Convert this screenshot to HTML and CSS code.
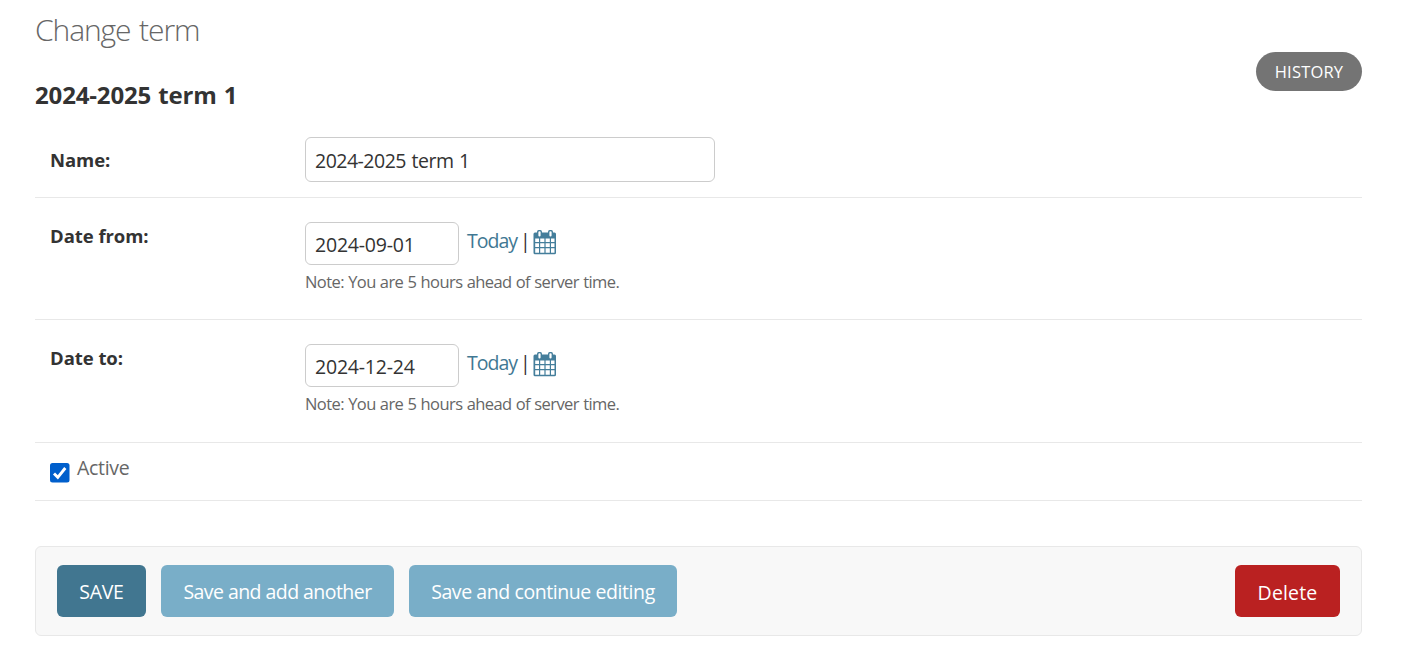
FILE: index.html
```html
<!DOCTYPE html>
<html lang="en">
<head>
<meta charset="utf-8">
<title>Change term</title>
<link rel="stylesheet" href="styles.css">
</head>
<body>
<svg width="0" height="0" class="sprite" aria-hidden="true">
  <symbol id="calendar" viewBox="0 0 24 25">
    <path fill="currentColor" fill-rule="evenodd" d="M0.500 4Q0.500 2.500 2 2.500H4V2Q4 0 5.700 0H7.300Q9 0 9 2V2.500H15V2Q15 0 16.700 0H18.300Q20 0 20 2V2.500H21.500Q23 2.500 23 4V22.800Q23 24.300 21.500 24.300H2Q0.500 24.300 0.500 22.800ZM5.400 2V5.500Q5.400 6.400 6.500 6.400T7.600 5.500V2Q7.600 1.300 6.500 1.300T5.400 2ZM16.400 2V5.500Q16.400 6.400 17.500 6.400T18.600 5.500V2Q18.600 1.300 17.500 1.300T16.400 2ZM2.200 8.500V12H6V8.500ZM7.200 8.500V12H11.400V8.500ZM12.600 8.500V12H16.800V8.500ZM18 8.500V12H21.500V8.500ZM2.200 13.200V17H6V13.200ZM7.200 13.200V17H11.400V13.200ZM12.600 13.200V17H16.800V13.200ZM18 13.200V17H21.500V13.200ZM2.200 18.200V22.700H6V18.200ZM7.200 18.200V22.700H11.400V18.200ZM12.600 18.200V22.700H16.800V18.200ZM18 18.200V22.700H21.500V18.200Z"/>
  </symbol>
</svg>
<main class="content">
  <header class="page-header">
    <div>
      <h1 class="page-title">Change term</h1>
      <h2 class="object-name">2024-2025 term 1</h2>
    </div>
    <a class="history">HISTORY</a>
  </header>
  <form>
    <div class="row row-name">
      <label class="label" for="name">Name:</label>
      <input class="field field-name" id="name" type="text" value="2024-2025 term 1">
    </div>
    <div class="row row-date">
      <label class="label" for="from">Date from:</label>
      <div>
        <div class="date-line">
          <input class="field field-date" id="from" type="text" value="2024-09-01">
          <a class="today">Today</a><span class="bar">|</span><svg class="calendar"><use href="#calendar"/></svg>
        </div>
        <div class="note">Note: You are 5 hours ahead of server time.</div>
      </div>
    </div>
    <div class="row row-date row-to">
      <label class="label" for="to">Date to:</label>
      <div>
        <div class="date-line">
          <input class="field field-date" id="to" type="text" value="2024-12-24">
          <a class="today">Today</a><span class="bar">|</span><svg class="calendar"><use href="#calendar"/></svg>
        </div>
        <div class="note">Note: You are 5 hours ahead of server time.</div>
      </div>
    </div>
    <div class="row row-active">
      <svg class="check" viewBox="0 0 20 20" role="checkbox" aria-checked="true"><rect width="19.500" height="19.500" rx="2.500" fill="#005fcc"/><path d="M4 10.500L7.800 14.300L15.300 5" fill="none" stroke="#fff" stroke-width="2.900"/></svg>
      <label class="active-label">Active</label>
    </div>
    <div class="submit-row">
      <button class="btn btn-save" type="button">SAVE</button>
      <button class="btn btn-another" type="button">Save and add another</button>
      <button class="btn btn-continue" type="button">Save and continue editing</button>
      <a class="btn btn-delete">Delete</a>
    </div>
  </form>
</main>
</body>
</html>
```
FILE: styles.css
```css
* { box-sizing: border-box; }
body {
  margin: 0;
  background: #fff;
  color: #333;
  font-family: "Segoe UI", "Open Sans", "Noto Sans", sans-serif;
  font-size: 19.500px;
}
.sprite { position: absolute; }
.content { padding: 10px 42px 0 35px; }
.page-header { display: flex; justify-content: space-between; height: 111px; }
.page-title { margin: 0 0 34px; font-size: 30px; line-height: 40px; font-weight: 300; color: #666; letter-spacing: -1.100px; word-spacing: 2px; }
.object-name { margin: 0; font-size: 24px; line-height: 22px; font-weight: 700; letter-spacing: -0.150px; }
.object-name, .field-name { word-spacing: 1px; }
.history {
  width: 106px; height: 39px; margin-top: 42px; border-radius: 20px;
  background: #747474; color: #fff; font-size: 16.500px; line-height: 39px;
  text-align: center; letter-spacing: 0.200px;
}
.row { display: flex; padding-left: 15px; border-bottom: 1px solid #e8e8e8; }
.label { width: 255px; font-size: 18.500px; font-weight: 700; line-height: 28px; letter-spacing: -0.050px; }
.row-name { height: 77px; padding-top: 16px; }
.row-name .label { padding-top: 9px; }
.row-date { height: 122px; padding-top: 24px; }
.row-to { height: 123px; }
.field {
  border: 1px solid #ccc; border-radius: 6px; background: #fff; color: #333;
  font: inherit; padding: 1px 9px 0; outline: none;
}
.field-name { width: 410px; height: 45px; letter-spacing: -0.500px; }
.field-date { width: 154px; height: 43px; letter-spacing: -0.200px; }
.date-line { display: flex; height: 43px; }
.today { width: 57px; padding-left: 8px; color: #417893; line-height: 38px; letter-spacing: -1px; white-space: nowrap; }
.date-line .bar { width: 17px; padding-left: 4px; line-height: 38px; }
.calendar { width: 24px; height: 25px; margin-top: 8px; color: #447e9b; }
.note { margin-top: 5px; color: #666; font-size: 16.500px; line-height: 24px; white-space: nowrap; letter-spacing: -0.580px; word-spacing: 0.500px; }
.row-active { height: 58px; }
.check { width: 20px; height: 20px; margin-top: 20px; }
.active-label { margin-left: 7px; color: #666; line-height: 50px; letter-spacing: -0.300px; }
.submit-row {
  display: flex; gap: 15px; height: 90px; margin-top: 45px; padding: 18px 21px;
  border: 1px solid #e8e8e8; border-radius: 6px; background: #f8f8f8;
}
.btn {
  height: 52px; padding: 0; border: 0; border-radius: 6px; color: #fff;
  font: inherit; line-height: 54px; text-align: center; white-space: nowrap; letter-spacing: -0.300px;
}
.btn-save { width: 89px; background: #417690; }
.btn-another { width: 233px; background: #79aec8; letter-spacing: -0.550px; }
.btn-continue { width: 268px; background: #79aec8; letter-spacing: -0.420px; }
.btn-delete { width: 105px; margin-left: auto; background: #ba2121; line-height: 55px; letter-spacing: 0.150px; }
```
